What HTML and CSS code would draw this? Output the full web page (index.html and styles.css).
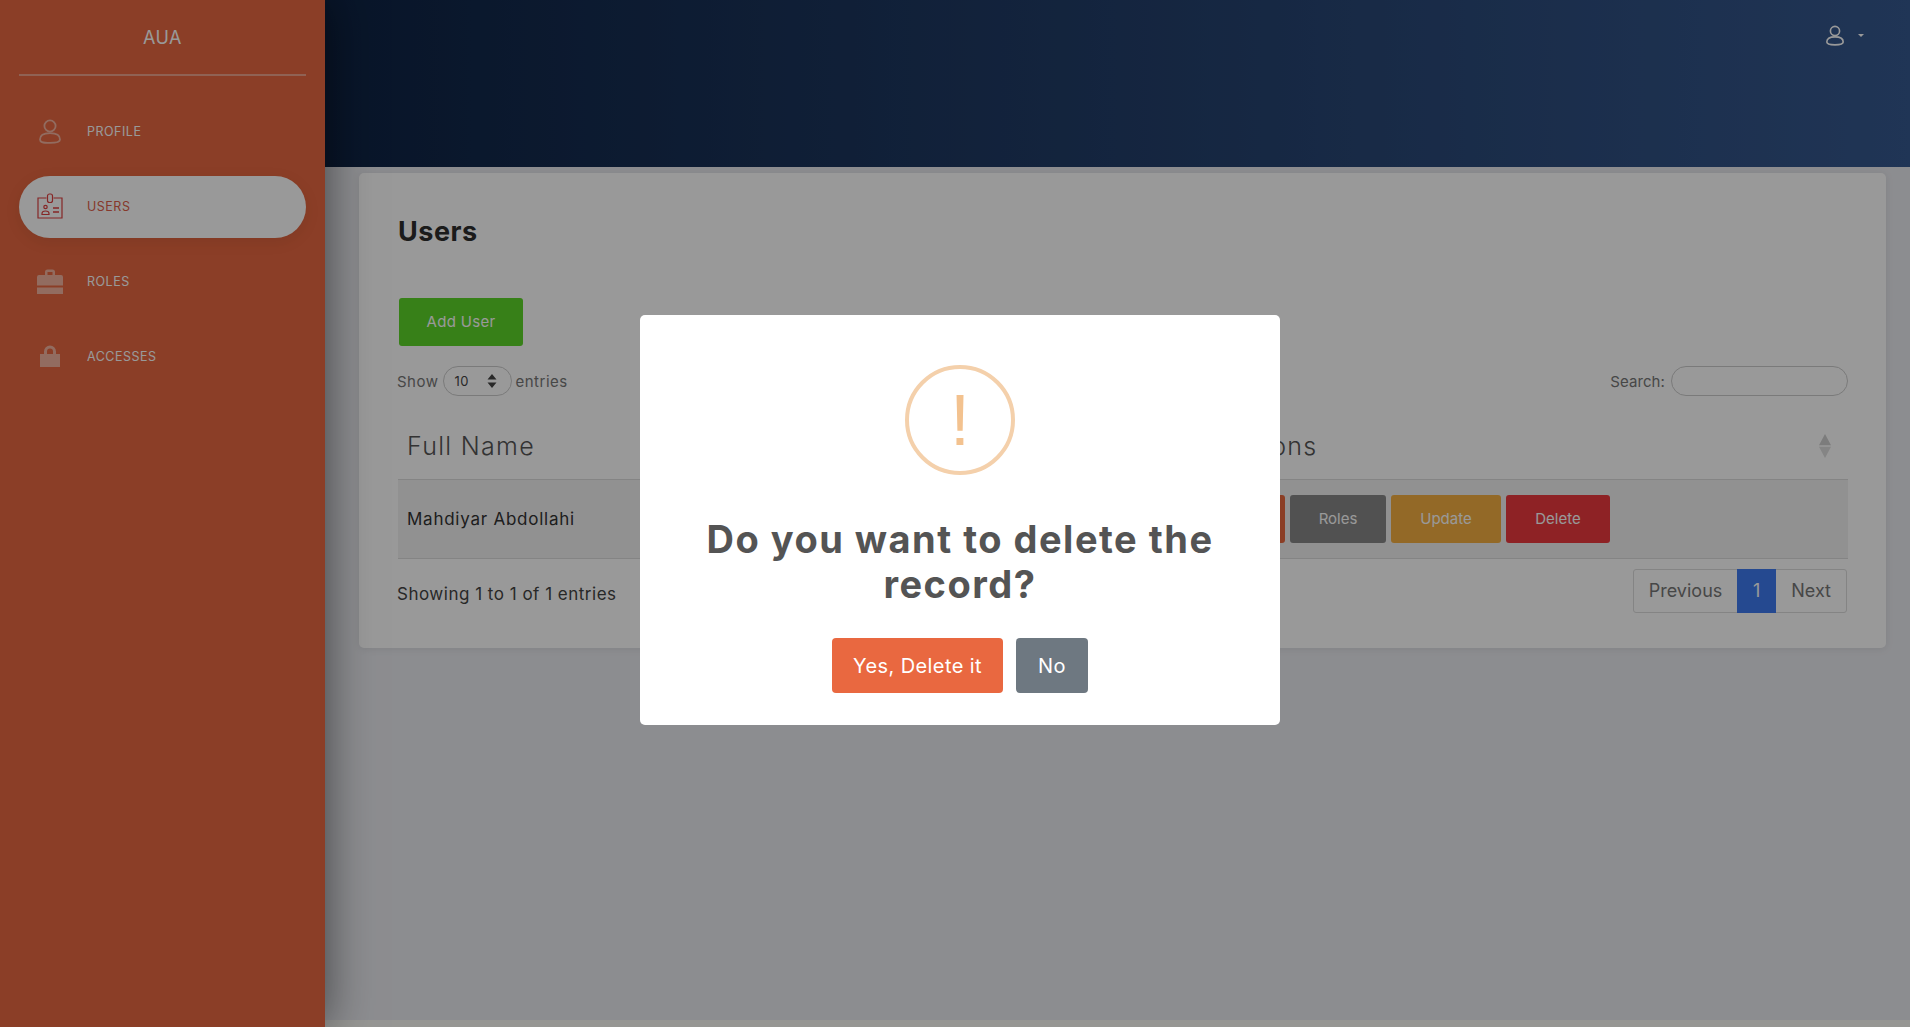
FILE: index.html
```html
<!DOCTYPE html>
<html lang="en">
  <head>
    <meta charset="UTF-8" />
    <meta name="viewport" content="width=device-width, initial-scale=1.0" />
    <title>AUA - Users</title>
    <link rel="stylesheet" href="styles.css">
  </head>

  <body>
    <aside class="sidebar">
      <div class="brand">AUA</div>
      <nav class="menu">
        <a class="menu-item">
          <span class="menu-icon">
            <svg width="22" height="25" viewBox="0 0 22 25" fill="none" stroke="currentColor" stroke-width="1.8">
              <circle cx="11" cy="7" r="5.6" />
              <path d="M1 20.5c0-4 3-6.3 10-6.3s10 2.3 10 6.3c0 2.3-2 3.4-10 3.4S1 22.800 1 20.500z" />
            </svg>
          </span>
          PROFILE
        </a>
        <a class="menu-item active">
          <span class="menu-icon">
            <svg width="26" height="26" viewBox="0 0 26 26" fill="none" stroke="currentColor" stroke-width="1.2">
              <path d="M9.500 5H1v20h24V5h-8.500" />
              <rect x="10.500" y="1" width="5" height="8.500" rx="2" />
              <circle cx="8.500" cy="14" r="1.700" />
              <path d="M5 21.500v-.8c0-1.700 1.300-2.700 3.500-2.700s3.500 1 3.500 2.700v.8z" />
              <path d="M16 15h6M16 19h6" stroke-width="1.500" />
            </svg>
          </span>
          USERS
        </a>
        <a class="menu-item">
          <span class="menu-icon">
            <svg width="26" height="25" viewBox="0 0 26 25" fill="currentColor">
              <path d="M8 6V3a2.500 2.500 0 0 1 2.500-2.500h5A2.500 2.500 0 0 1 18 3v3h6a2 2 0 0 1 2 2v8.500H0V8a2 2 0 0 1 2-2zM10.500 3v3h5V3z" fill-rule="evenodd" />
              <rect x="0" y="18.500" width="26" height="6.500" />
            </svg>
          </span>
          ROLES
        </a>
        <a class="menu-item">
          <span class="menu-icon">
            <svg width="20" height="22" viewBox="0 0 20 22" fill="currentColor">
              <path d="M4 9V6.500a6 6 0 0 1 12 0V9h4v13H0V9zm3 0h6V6.500a3 3 0 0 0-6 0z" fill-rule="evenodd" />
            </svg>
          </span>
          ACCESSES
        </a>
      </nav>
    </aside>

    <div class="main">
      <header class="topbar">
        <div class="user-menu">
          <svg width="18" height="21" viewBox="0 0 22 25" fill="none" stroke="currentColor" stroke-width="2">
            <circle cx="11" cy="7" r="5.600" />
            <path d="M1 20.500c0-4 3-6.300 10-6.300s10 2.300 10 6.300c0 2.300-2 3.400-10 3.400S1 22.800 1 20.500z" />
          </svg>
          <span class="caret"></span>
        </div>
      </header>

      <section class="content">
        <div class="card">
          <h1 class="card-title">Users</h1>
          <button class="btn btn-add">Add User</button>

          <div class="table-tools">
            <div class="length-box">
              Show
              <span class="fake-select">
                10
                <svg width="10" height="14" viewBox="0 0 10 14" fill="currentColor">
                  <path d="M5 0l4.500 5.500h-9zM5 14L.5 8.500h9z" />
                </svg>
              </span>
              entries
            </div>
            <div class="search-box">
              Search:
              <input class="search-input" type="text" />
            </div>
          </div>

          <table class="data-table">
            <thead>
              <tr>
                <th class="col-name">Full Name</th>
                <th class="col-actions">
                  <div class="th-inner">
                    Actions
                    <svg width="14" height="24" viewBox="0 0 14 24">
                      <path d="M7 0l6 11.300H1z" fill="#cfcfcf" />
                      <path d="M7 24l6-11.300H1z" fill="#dedede" />
                    </svg>
                  </div>
                </th>
              </tr>
            </thead>
            <tbody>
              <tr>
                <td>Mahdiyar Abdollahi</td>
                <td>
                  <div class="row-actions">
                    <button class="btn btn-orange">Access</button>
                    <button class="btn btn-gray">Roles</button>
                    <button class="btn btn-yellow">Update</button>
                    <button class="btn btn-red">Delete</button>
                  </div>
                </td>
              </tr>
            </tbody>
          </table>

          <div class="table-foot">
            <div class="table-info">Showing 1 to 1 of 1 entries</div>
            <div class="pager">
              <span class="page-link">Previous</span>
              <span class="page-link current">1</span>
              <span class="page-link">Next</span>
            </div>
          </div>
        </div>
      </section>

      <footer class="footer"></footer>
    </div>

    <!-- Bekreftelse over hele siden -->
    <div class="overlay">
      <div class="modal">
        <div class="modal-icon">!</div>
        <h2 class="modal-title">Do you want to delete the record?</h2>
        <div class="modal-actions">
          <button class="modal-btn modal-yes">Yes, Delete it</button>
          <button class="modal-btn modal-no">No</button>
        </div>
      </div>
    </div>
  </body>
</html>
```

FILE: styles.css
```css
* {
  box-sizing: border-box;
}

html,
body {
  height: 100%;
}

body {
  margin: 0;
  display: flex;
  overflow: hidden;
  font-family: Inter, "Noto Sans", sans-serif;
  color: #333;
  background-color: #eaebf0;
}

/* Sidemeny */
.sidebar {
  flex: 0 0 325px;
  height: 100%;
  padding: 0 19px;
  background-color: #e86841;
  box-shadow: 0 0 45px rgba(0, 0, 0, 0.55);
  position: relative;
  z-index: 1;
}

.brand {
  height: 76px;
  padding-top: 27px;
  border-bottom: 2px solid rgba(255, 255, 255, 0.4);
  font-size: 18px;
  line-height: 22px;
  letter-spacing: 0.5px;
  text-align: center;
  color: #fff;
}

.menu {
  display: flex;
  flex-direction: column;
  gap: 13px;
  padding-top: 25px;
}

.menu-item {
  display: flex;
  align-items: center;
  height: 62px;
  padding-bottom: 2px;
  border-radius: 31px;
  font-size: 12.500px;
  letter-spacing: 0.5px;
  color: #fff;
}

.menu-icon {
  display: flex;
  justify-content: center;
  flex: 0 0 68px;
  padding-right: 6px;
  opacity: 0.5;
}

.menu-item.active {
  background-color: #fff;
  color: #e0604a;
  box-shadow: 0 4px 16px rgba(0, 0, 0, 0.08);
}

.menu-item.active .menu-icon {
  opacity: 1;
  color: #df4040;
}

/* Hovedinnhold */
.main {
  flex: 1;
  display: flex;
  flex-direction: column;
  min-width: 0;
}

.topbar {
  flex: 0 0 167px;
  display: flex;
  justify-content: flex-end;
  padding: 25px 46px 0 0;
  background: linear-gradient(90deg, #0e2344 0%, #36598f 100%);
}

.user-menu {
  display: flex;
  gap: 14px;
  height: 21px;
  color: #fff;
}

.caret {
  margin-top: 9px;
  border-top: 3px solid #fff;
  border-left: 3px solid transparent;
  border-right: 3px solid transparent;
  height: 0;
}

.content {
  flex: 1;
  padding: 6px 24px 0 34px;
}

.footer {
  flex: 0 0 7px;
  background-color: #fafaf6;
}

.card {
  height: 475px;
  padding: 37px 38px 0 39px;
  border-radius: 5px;
  background-color: #fff;
  box-shadow: 0 1px 8px rgba(0, 0, 0, 0.08);
}

.card-title {
  margin: 0;
  height: 88px;
  font-size: 27px;
  line-height: 44px;
  letter-spacing: 0.5px;
  font-weight: 700;
  color: #2d2d2d;
}

.btn {
  border: none;
  border-radius: 3px;
  height: 48px;
  padding: 0 0 2px;
  font-family: inherit;
  font-size: 15px;
  letter-spacing: 0.3px;
  color: #fff;
}

.btn-add {
  display: block;
  width: 124px;
  margin-left: 1px;
  background-color: #5cd528;
}

.table-tools {
  display: flex;
  justify-content: space-between;
  align-items: center;
  height: 30px;
  margin-top: 20px;
  margin-left: -1px;
  font-size: 15px;
  letter-spacing: 0.5px;
  color: #777;
}

.length-box,
.search-box {
  display: flex;
  align-items: center;
  gap: 4px;
}

.search-box {
  gap: 6px;
  letter-spacing: 0.1px;
}

.fake-select {
  display: flex;
  align-items: center;
  justify-content: space-between;
  width: 69px;
  height: 30px;
  padding: 0 14px 0 11px;
  border: 1px solid #ccc;
  border-radius: 15px;
  font-size: 13px;
  color: #444;
}

.search-input {
  width: 177px;
  height: 30px;
  border: 1px solid #ccc;
  border-radius: 15px;
  background: none;
}

.data-table {
  width: 100%;
  margin-top: 17px;
  border-collapse: collapse;
  table-layout: fixed;
}

.col-name {
  width: 802px;
}

.data-table th {
  height: 66px;
  padding: 0 8px 0 9px;
  font-size: 25px;
  letter-spacing: 1.3px;
  font-weight: 300;
  text-align: left;
  color: #555;
}

.data-table .col-actions {
  padding-left: 22px;
}

.th-inner {
  display: flex;
  justify-content: space-between;
  align-items: center;
  padding-right: 8px;
}

.data-table td {
  height: 79px;
  padding: 0 8px 0 9px;
  border-top: 1px solid #ddd;
  border-bottom: 1px solid #ddd;
  background-color: #f2f2f2;
  font-size: 17px;
  letter-spacing: 0.75px;
  color: #333;
}

.row-actions {
  display: flex;
  gap: 5px;
}

.row-actions .btn {
  padding: 0;
  letter-spacing: 0;
}

.btn-orange {
  width: 76px;
  background-color: #e8683f;
}

.btn-gray {
  width: 96px;
  background-color: #888;
}

.btn-yellow {
  width: 110px;
  background-color: #f6b042;
}

.btn-red {
  width: 104px;
  background-color: #ed3a3f;
}

.table-foot {
  display: flex;
  justify-content: space-between;
  margin-top: 10px;
  margin-left: -1px;
}

.table-info {
  padding-top: 14px;
  font-size: 17px;
  line-height: 22px;
  letter-spacing: 0.5px;
  color: #444;
}

.pager {
  display: flex;
  height: 44px;
  border: 1px solid #ddd;
  border-radius: 3px;
  margin-right: 1px;
  font-size: 18px;
  color: #777;
}

.page-link {
  display: flex;
  align-items: center;
  padding: 0 15px;
}

.current {
  margin: -1px 0;
  padding: 0;
  width: 39px;
  justify-content: center;
  background-color: #3f7af0;
  color: #fff;
}

/* Dialogboksen */
.overlay {
  position: fixed;
  inset: 0;
  z-index: 10;
  display: flex;
  align-items: center;
  justify-content: center;
  padding: 13px 0 0 10px;
  background-color: rgba(0, 0, 0, 0.4);
}

.modal {
  display: flex;
  flex-direction: column;
  align-items: center;
  width: 640px;
  height: 410px;
  padding-top: 50px;
  border-radius: 5px;
  background-color: #fff;
}

.modal-icon {
  display: flex;
  align-items: center;
  justify-content: center;
  width: 110px;
  height: 110px;
  border: 4px solid #f4d0ab;
  border-radius: 50%;
  font-family: "Liberation Sans", sans-serif;
  font-size: 72px;
  color: #f3c28f;
}

.modal-title {
  width: 560px;
  margin: 42px 0 0;
  font-size: 38px;
  line-height: 45px;
  letter-spacing: 1.5px;
  font-weight: 700;
  text-align: center;
  color: #545454;
}

.modal-actions {
  display: flex;
  gap: 13px;
  margin-top: 31px;
}

.modal-btn {
  height: 55px;
  border: none;
  border-radius: 4px;
  font-family: inherit;
  font-size: 20px;
  letter-spacing: 0.4px;
  color: #fff;
}

.modal-yes {
  width: 171px;
  background-color: #e96840;
}

.modal-no {
  width: 72px;
  background-color: #6e7881;
}
```
